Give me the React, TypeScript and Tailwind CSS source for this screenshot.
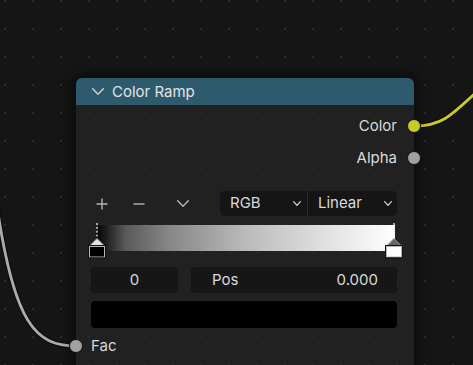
import React from "react";

const font = { fontFamily: "Inter, 'Noto Sans', sans-serif" };

function Chevron({ w = 12, h = 7, color = "#cfcfcf", sw = 1.4 }: { w?: number; h?: number; color?: string; sw?: number }) {
  return (
    <svg width={w} height={h} viewBox={`0 0 ${w} ${h}`} fill="none">
      <path d={`M${sw / 2} ${sw / 2} L${w / 2} ${h - sw / 2} L${w - sw / 2} ${sw / 2}`} stroke={color} strokeWidth={sw} strokeLinecap="round" strokeLinejoin="round" />
    </svg>
  );
}

function Marker({ tri, box }: { tri: string; box: string }) {
  return (
    <svg width="18" height="36" viewBox="0 0 18 36" fill="none">
      <line x1="9" y1="0" x2="9" y2="15" stroke="#f0f0f0" strokeWidth="1.3" strokeDasharray="2.2 1.6" />
      <path d="M1 23.5 L9 15.5 L17 23.5 Z" fill={tri} stroke="#9a9a9a" strokeWidth="1" />
      <rect x="1.5" y="23.5" width="15" height="10.5" fill={box} stroke="#b8b8b8" strokeWidth="1" />
      <rect x="0.5" y="22.5" width="17" height="12.5" fill="none" stroke="#111" strokeWidth="1" />
    </svg>
  );
}

export default function App() {
  return (
    <div
      className="relative w-[473px] h-[365px] overflow-hidden bg-[#151515] bg-[radial-gradient(circle,#2c2c2c_0.9px,transparent_1.2px)] bg-[size:28px_28px] bg-[position:-9px_15px]"
      style={font}
    >
      {/* wires */}
      <svg className="absolute inset-0" width="473" height="365" viewBox="0 0 473 365" fill="none">
        <path d="M76 346 C 36 346, 14 324, -3 206" stroke="#0c0c0c" strokeWidth="4.8" />
        <path d="M76 346 C 36 346, 14 324, -3 206" stroke="#ababab" strokeWidth="2.8" />
        <path d="M414 126 C 446 126, 452 114, 500 70" stroke="#0c0c0c" strokeWidth="4.8" />
        <path d="M414 126 C 446 126, 452 114, 500 70" stroke="#c9c92a" strokeWidth="2.8" />
      </svg>

      {/* node */}
      <div className="absolute left-[76px] top-[78px] w-[338px] h-[300px] rounded-t-[6px] shadow-[0_0_10px_4px_rgba(0,0,0,0.45)] flex flex-col">
        <div className="h-[27px] shrink-0 bg-[#2e5a6e] rounded-t-[6px] flex items-center pl-[16px] text-[15px] text-[#e2e2e2]">
          <Chevron />
          <span className="ml-[8px] leading-none">Color Ramp</span>
        </div>
        <div className="flex-1 bg-[#212121] bg-[radial-gradient(circle,#282828_0.9px,transparent_1.2px)] bg-[size:28px_28px] bg-[position:-1px_-6px] pl-[15px] pr-[17px] pt-[10px] flex flex-col text-[15px] text-[#dadada]">
          <div className="h-[22px] flex items-center justify-end">Color</div>
          <div className="h-[22px] mt-[10px] flex items-center justify-end">Alpha</div>

          {/* toolbar */}
          <div className="h-[25px] mt-[22px] flex items-center">
            <svg className="ml-[5px]" width="12" height="12" viewBox="0 0 12 12">
              <path d="M6 0.5 V11.5 M0.5 6 H11.5" stroke="#b5b5b5" strokeWidth="1.4" />
            </svg>
            <svg className="ml-[25px]" width="12" height="12" viewBox="0 0 12 12">
              <path d="M0.5 6 H11.5" stroke="#b5b5b5" strokeWidth="1.4" />
            </svg>
            <span className="ml-[32px]">
              <Chevron w={12} h={7} color="#b5b5b5" sw={1.4} />
            </span>
            <div className="ml-auto w-[177px] h-[25px] rounded-[5px] bg-[#151515] flex">
              <div className="w-[88px] flex items-center pl-[10px] pr-[6px] border-r border-[#2c2c2c]">
                <span className="flex-1">RGB</span>
                <Chevron w={8} h={5} color="#d0d0d0" sw={1.3} />
              </div>
              <div className="flex-1 flex items-center pl-[10px] pr-[5px]">
                <span className="flex-1">Linear</span>
                <Chevron w={8} h={5} color="#d0d0d0" sw={1.3} />
              </div>
            </div>
          </div>

          {/* ramp */}
          <div className="relative mt-[9px] h-[26px] ml-[5px] w-[299px]">
            <div className="h-full bg-[linear-gradient(to_right,#000_0%,#5a5a5a_10%,#888_25%,#bababa_50%,#dedede_75%,#fff_100%)]" />
            <div className="absolute left-[-8px] top-[-2px]">
              <Marker tri="#e4e4e4" box="#000" />
            </div>
            <div className="absolute left-[289px] top-[-2px]">
              <Marker tri="#666666" box="#ffffff" />
            </div>
          </div>

          {/* fields */}
          <div className="mt-[16px] h-[26px] flex gap-[13px]">
            <div className="w-[87px] rounded-[4px] bg-[#161616] flex items-center justify-center">0</div>
            <div className="flex-1 rounded-[4px] bg-[#161616] flex items-center pl-[21px] pr-[19px]">
              <span className="flex-1">Pos</span>
              <span>0.000</span>
            </div>
          </div>
          <div className="mt-[8px] h-[27px] rounded-[4px] bg-black" />

          <div className="mt-[7px] h-[22px] flex items-center">Fac</div>
        </div>
      </div>

      {/* sockets */}
      <div className="absolute left-[407px] top-[119px] w-[14px] h-[14px] rounded-full bg-[#c9c92a] border border-[#111]" />
      <div className="absolute left-[407px] top-[151px] w-[14px] h-[14px] rounded-full bg-[#a1a1a1] border border-[#111]" />
      <div className="absolute left-[69px] top-[339px] w-[14px] h-[14px] rounded-full bg-[#a1a1a1] border border-[#111]" />
    </div>
  );
}
